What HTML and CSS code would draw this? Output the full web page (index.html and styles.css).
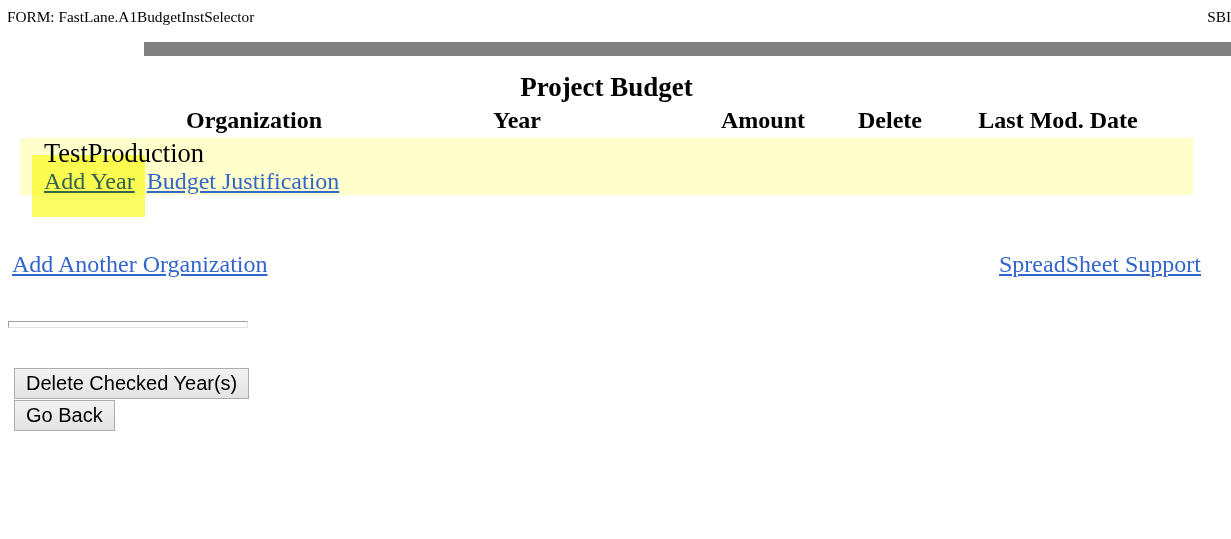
FILE: index.html
```html
<!DOCTYPE html>
<html>
<head>
<meta charset="utf-8">
<title>Project Budget</title>
<link rel="stylesheet" href="styles.css">
</head>
<body>
<div class="topline">
  <span class="formname">FORM: FastLane.A1BudgetInstSelector</span>
  <span class="sys">SBI</span>
</div>
<div class="graybar"></div>

<div class="budget">
  <div class="title">Project Budget</div>
  <div class="headers">
    <span></span>
    <span>Organization</span>
    <span>Year</span>
    <span>Amount</span>
    <span>Delete</span>
    <span>Last Mod. Date</span>
  </div>
  <div class="orgrow">
    <div class="orgname">TestProduction</div>
    <div class="orglinks"><a href="#">Add Year</a><a href="#" class="just">Budget Justification</a></div>
    <div class="highlight"></div>
  </div>
</div>

<div class="actions">
  <a href="#">Add Another Organization</a>
  <a href="#">SpreadSheet Support</a>
</div>

<div class="emptybox"></div>

<div class="buttons">
  <button type="button">Delete Checked Year(s)</button>
  <button type="button">Go Back</button>
</div>
</body>
</html>
```

FILE: styles.css
```css
body {
  margin: 8px 0 8px 8px;
  font-family: "Liberation Serif", "Times New Roman", serif;
  color: #000;
  background: #fff;
}
a {
  color: #3366cc;
}
.topline {
  display: flex;
  justify-content: space-between;
  font-size: 15.3px;
  line-height: 17px;
  margin-left: -1px;
}
.sys {
  white-space: nowrap;
}
.graybar {
  margin-top: 17px;
  margin-left: 136px;
  height: 14px;
  background: #808080;
}
.budget {
  width: 1173px;
  margin-left: 12px;
  margin-top: 16px;
}
.title {
  text-align: center;
  font-weight: bold;
  font-size: 27px;
  line-height: 30px;
}
.headers {
  display: grid;
  grid-template-columns: 130px 208px 318px 174px 80px 256px;
  margin-top: 4px;
  font-weight: bold;
  font-size: 24px;
  line-height: 28px;
  text-align: center;
}
.orgrow {
  position: relative;
  margin-top: 4px;
  background: #ffffcc;
  padding: 1px 0 0 24px;
  height: 56px;
}
.orgname {
  font-size: 26.5px;
  line-height: 28px;
}
.orglinks {
  font-size: 24px;
  line-height: 28px;
}
.orglinks .just {
  margin-left: 12px;
}
.highlight {
  position: absolute;
  left: 12px;
  top: 17px;
  width: 113px;
  height: 62px;
  background: #fbfb64;
  mix-blend-mode: multiply;
}
.actions {
  display: flex;
  justify-content: space-between;
  width: 1189px;
  margin-left: 4px;
  margin-top: 55px;
  font-size: 24px;
  line-height: 28px;
}
.emptybox {
  width: 238px;
  height: 5px;
  margin-top: 43px;
  border: 1px solid;
  border-color: #a0a0a0 #e3e3e3 #e3e3e3 #a0a0a0;
}
.buttons {
  display: flex;
  flex-direction: column;
  align-items: flex-start;
  gap: 1px;
  margin-top: 40px;
  margin-left: 6px;
}
.buttons button {
  font-family: "Liberation Sans", Arial, sans-serif;
  font-size: 20px;
  line-height: 23px;
  height: 31px;
  padding: 0 11px;
  color: #000;
  background: linear-gradient(#f2f2f2, #e3e3e3);
  border: 1px solid #adadad;
  border-radius: 0;
}
```
